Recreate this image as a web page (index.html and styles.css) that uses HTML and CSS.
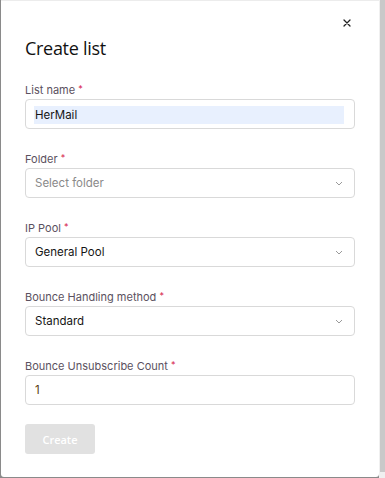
FILE: index.html
```html
<!DOCTYPE html>
<html>
<head>
<meta charset="utf-8">
<link rel="stylesheet" href="styles.css">
</head>
<body>
<div class="frame">
  <div class="modal">
    <button class="close" aria-label="Close">
      <svg width="8" height="8" viewBox="0 0 8 8"><path d="M1 1L7 7M7 1L1 7" stroke="#222" stroke-width="1.3" stroke-linecap="round"/></svg>
    </button>
    <h1 class="title">Create list</h1>
    <form class="form">
      <div class="field">
        <label class="label">List name <span class="req">*</span></label>
        <div class="input"><span class="autofill">HerMail</span></div>
      </div>
      <div class="field">
        <label class="label">Folder <span class="req">*</span></label>
        <div class="input select"><span class="placeholder">Select folder</span>
          <svg class="chev" width="8" height="5" viewBox="0 0 8 5"><path d="M1 1L4 4L7 1" fill="none" stroke="#9a9a9a" stroke-width="1"/></svg></div>
      </div>
      <div class="field">
        <label class="label">IP Pool <span class="req">*</span></label>
        <div class="input select"><span class="value">General Pool</span>
          <svg class="chev" width="8" height="5" viewBox="0 0 8 5"><path d="M1 1L4 4L7 1" fill="none" stroke="#9a9a9a" stroke-width="1"/></svg></div>
      </div>
      <div class="field">
        <label class="label">Bounce Handling method <span class="req">*</span></label>
        <div class="input select"><span class="value">Standard</span>
          <svg class="chev" width="8" height="5" viewBox="0 0 8 5"><path d="M1 1L4 4L7 1" fill="none" stroke="#9a9a9a" stroke-width="1"/></svg></div>
      </div>
      <div class="field">
        <label class="label">Bounce Unsubscribe Count <span class="req">*</span></label>
        <div class="input"><span class="value count">1</span></div>
      </div>
      <div class="actions">
        <button type="button" class="btn" disabled>Create</button>
      </div>
    </form>
  </div>
  <div class="scrollbar"><div class="thumb"></div></div>
</div>
</body>
</html>
```
FILE: styles.css
```css
* { box-sizing: border-box; }
html, body { margin: 0; padding: 0; }
body {
  width: 385px;
  height: 478px;
  overflow: hidden;
  background: #ffffff;
  font-family: Inter, "Noto Sans", sans-serif;
}
.frame {
  display: flex;
  height: 478px;
  background: #8a8a8a;
}
.modal {
  position: relative;
  flex: 1;
  margin-left: 1px;
  margin-bottom: 1px;
  background: #ffffff;
  border-top: 1px solid #ececec;
  border-radius: 0 0 3px 3px;
  padding: 37px 24px 0 24px;
}
.close {
  position: absolute;
  top: 17px;
  right: 27px;
  width: 10px;
  height: 10px;
  padding: 0;
  border: 0;
  background: none;
  display: flex;
  align-items: center;
  justify-content: center;
}
.title {
  margin: 0;
  font-family: "Open Sans", Inter, sans-serif;
  font-weight: 500;
  font-size: 18px;
  line-height: 20px;
  letter-spacing: -0.3px;
  color: #111111;
}
.form {
  display: flex;
  flex-direction: column;
  gap: 23px;
  margin-top: 25px;
  width: 330px;
}
.field {
  display: flex;
  flex-direction: column;
  gap: 2px;
}
.label {
  display: block;
  height: 14px;
  font-size: 11px;
  line-height: 14px;
  color: #5b5160;
}
.req { color: #d6204a; font-size: 9px; line-height: 1; vertical-align: top; position: relative; top: 1px; }
.input {
  height: 30px;
  border: 1px solid #d9d9d9;
  border-radius: 4px;
  display: flex;
  align-items: center;
  padding: 0 8px;
  font-size: 11.5px;
  color: #151515;
}
.autofill {
  flex: 1;
  background: #e8f0fe;
  height: 18px;
  line-height: 18px;
  margin-right: 2px;
  padding-left: 1px;
  margin-top: 1px;
}
.select { justify-content: space-between; padding-right: 11px; }
.placeholder { color: #8a8a8a; padding-left: 1px; }
.value { padding-left: 1px; }
.count { color: #5a3b10; }
.chev { display: block; }
.actions { margin-top: -4px; }
.btn {
  width: 70px;
  height: 30px;
  border: 0;
  border-radius: 3px;
  background: #e1e1e1;
  color: #ffffff;
  font-family: "Open Sans", Inter, sans-serif;
  font-weight: 600;
  font-size: 11px;
}
.scrollbar {
  width: 7px;
  background: #f0f0f0;
  display: flex;
  flex-direction: column;
}
.thumb {
  height: 472px;
  width: 6px;
  margin-left: 1px;
  background: #c9c9c9;
}
```
